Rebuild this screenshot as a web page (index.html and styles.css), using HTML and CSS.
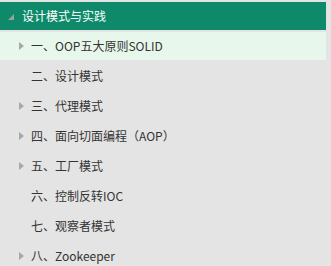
FILE: index.html
```html
<!DOCTYPE html>
<html>
<head>
<meta charset="utf-8">
<link rel="stylesheet" href="styles.css">
</head>
<body>
<div class="tree">
  <div class="header"><span class="caret-open"></span><span class="label">设计模式与实践</span></div>
  <div class="row selected"><span class="caret"></span><span class="label">一、OOP五大原则SOLID</span></div>
  <div class="row"><span class="caret none"></span><span class="label">二、设计模式</span></div>
  <div class="row"><span class="caret"></span><span class="label">三、代理模式</span></div>
  <div class="row"><span class="caret"></span><span class="label">四、面向切面编程（AOP）</span></div>
  <div class="row"><span class="caret"></span><span class="label">五、工厂模式</span></div>
  <div class="row"><span class="caret none"></span><span class="label">六、控制反转IOC</span></div>
  <div class="row"><span class="caret none"></span><span class="label">七、观察者模式</span></div>
  <div class="row"><span class="caret"></span><span class="label">八、Zookeeper</span></div>
</div>
</body>
</html>
```
FILE: styles.css
```css
html, body {
  margin: 0;
  padding: 0;
  background: #e4e4e4;
}
body {
  width: 331px;
  height: 266px;
  overflow: hidden;
  font-family: "Noto Sans CJK SC", "Noto Sans", sans-serif;
  font-size: 12px;
}
.tree {
  display: flex;
  flex-direction: column;
  gap: 2px;
  padding-top: 2px;
  width: 326px;
}
.header {
  height: 28px;
  background: #0e8a6a;
  color: #fff;
  display: flex;
  align-items: center;
  padding-left: 8px;
  font-size: 12px;
}
.caret-open {
  width: 0;
  height: 0;
  border-left: 6px solid transparent;
  border-bottom: 6px solid #9aa09e;
  margin-right: 8px;
  margin-top: 2px;
}
.row {
  height: 28px;
  display: flex;
  align-items: center;
  padding-left: 19px;
  color: #333;
}
.row.selected {
  background: #e8f7ec;
}
.caret {
  width: 0;
  height: 0;
  border-top: 4px solid transparent;
  border-bottom: 4px solid transparent;
  border-left: 5px solid #a8a8a8;
  margin-right: 7px;
}
.caret.none {
  border-left-color: transparent;
}
.label {
  line-height: 16px;
}
```
